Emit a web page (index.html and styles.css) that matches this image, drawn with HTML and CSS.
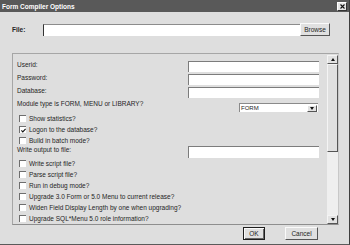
FILE: index.html
```html
<!DOCTYPE html>
<html lang="en">
  <head>
    <meta charset="UTF-8" />
    <title>Form Compiler Options</title>
    <link rel="stylesheet" href="styles.css">
  </head>
  <body>
    <div class="window">
      <div class="titlebar">
        <span class="title">Form Compiler Options</span>
        <span class="close">
          <svg width="5" height="5" viewBox="0 0 5 5">
            <path d="M0.5 0.5 L4.5 4.5 M4.5 0.5 L0.5 4.5" stroke="#111" stroke-width="1.1" />
          </svg>
        </span>
      </div>
      <div class="content">
        <div class="file-row">
          <label class="file-label">File:</label>
          <div class="file-input"></div>
          <button class="btn browse">Browse</button>
        </div>

        <div class="panel">
          <div class="panel-content">
            <div class="field-row">
              <label>Userid:</label>
              <div class="text-input"></div>
            </div>
            <div class="field-row">
              <label>Password:</label>
              <div class="text-input"></div>
            </div>
            <div class="field-row">
              <label>Database:</label>
              <div class="text-input"></div>
            </div>
            <div class="field-row">
              <label>Module type is FORM, MENU or LIBRARY?</label>
              <div class="select">
                <span class="select-value">FORM</span>
                <span class="select-btn"><span class="arrow-down"></span></span>
              </div>
            </div>
            <div class="check-row"><span class="cb"></span>Show statistics?</div>
            <div class="check-row">
              <span class="cb">
                <svg width="5" height="5" viewBox="0 0 5 5">
                  <path d="M0.4 2.4 L1.8 3.9 L4.6 0.8" stroke="#111" stroke-width="1.1" fill="none" />
                </svg>
              </span>Logon to the database?
            </div>
            <div class="check-row"><span class="cb"></span>Build in batch mode?</div>
            <div class="field-row output-row">
              <label>Write output to file:</label>
              <div class="text-input tall"></div>
            </div>
            <div class="check-row"><span class="cb"></span>Write script file?</div>
            <div class="check-row"><span class="cb"></span>Parse script file?</div>
            <div class="check-row"><span class="cb"></span>Run in debug mode?</div>
            <div class="check-row"><span class="cb"></span>Upgrade 3.0 Form or 5.0 Menu to current release?</div>
            <div class="check-row"><span class="cb"></span>Widen Field Display Length by one when upgrading?</div>
            <div class="check-row"><span class="cb"></span>Upgrade SQL*Menu 5.0 role information?</div>
          </div>
          <div class="scrollbar">
            <div class="sb-btn"><span class="arrow-up"></span></div>
            <div class="sb-thumb"></div>
            <div class="sb-track"></div>
            <div class="sb-btn"><span class="arrow-down"></span></div>
          </div>
        </div>

        <div class="actions">
          <button class="btn ok">OK</button>
          <button class="btn cancel">Cancel</button>
        </div>
      </div>
    </div>
  </body>
</html>
```

FILE: styles.css
```css
* {
  box-sizing: border-box;
}
body {
  margin: 0;
  font-family: "Liberation Sans", Arial, sans-serif;
  font-size: 6.5px;
  color: #252525;
}
.window {
  width: 350px;
  height: 245px;
  background: #dedede;
  border-right: 1px solid #3e3e3e;
  border-bottom: 1px solid #5a5a5a;
  display: flex;
  flex-direction: column;
}
.titlebar {
  height: 12px;
  flex-shrink: 0;
  background: #595959;
  display: flex;
  align-items: center;
  justify-content: space-between;
  padding: 0 2px 0 2px;
}
.title {
  color: #fff;
  font-weight: bold;
}
.close {
  width: 10px;
  height: 9px;
  background: #e6e6e6;
  border: 1px solid;
  border-color: #fff #333 #333 #fff;
  display: flex;
  align-items: center;
  justify-content: center;
}
.content {
  flex: 1;
  padding: 11px 10px 0 12px;
  display: flex;
  flex-direction: column;
}
.file-row {
  display: flex;
  align-items: center;
  height: 13px;
  padding-right: 9px;
}
.file-label {
  width: 31px;
  font-weight: bold;
}
.file-input {
  flex: 1;
  height: 12px;
  background: #fff;
  border-top: 1px solid #8c8c8c;
  border-left: 1px solid #333;
}
.btn {
  font-family: inherit;
  font-size: 6.5px;
  color: #252525;
  background: #e0e0e0;
  border: 1px solid;
  border-color: #fafafa #555 #555 #fafafa;
  padding: 0;
  height: 13px;
}
.browse {
  width: 30px;
}
.panel {
  margin-top: 17px;
  height: 172px;
  border: 1px solid #a6a6a6;
  border-right-color: #c8c8c8;
  border-bottom-color: #8e8e8e;
  display: flex;
}
.panel-content {
  flex: 1;
  padding: 7px 8px 0 4px;
}
.field-row {
  display: flex;
  justify-content: space-between;
  align-items: flex-start;
  height: 13px;
}
.field-row label {
  line-height: 8px;
}
.text-input {
  width: 131px;
  height: 11px;
  background: #fff;
  border-top: 1px solid #7c7c7c;
  border-left: 1px solid #7c7c7c;
}
.text-input.tall {
  height: 12px;
}
.output-row {
  height: 12px;
}
.select {
  width: 79px;
  height: 9px;
  margin-top: 3px;
  margin-right: 1px;
  background: #fff;
  border-top: 1px solid #8a8a8a;
  border-left: 1px solid #8a8a8a;
  display: flex;
  align-items: center;
  justify-content: space-between;
}
.select-value {
  padding-left: 1px;
  font-size: 6px;
}
.select-btn {
  width: 10px;
  height: 7px;
  margin-right: 1px;
  background: #e2e2e2;
  border: 1px solid;
  border-color: #fff #555 #555 #fff;
  display: flex;
  align-items: center;
  justify-content: center;
}
.check-row {
  display: flex;
  align-items: center;
  gap: 3px;
  height: 11px;
  padding-left: 2px;
}
.cb {
  width: 7px;
  height: 7px;
  background: #fff;
  border-top: 1px solid #6e6e6e;
  border-left: 1px solid #6e6e6e;
  display: flex;
  align-items: center;
  justify-content: center;
}
.scrollbar {
  width: 11px;
  margin-top: 1px;
  display: flex;
  flex-direction: column;
}
.sb-btn {
  height: 9px;
  background: #e2e2e2;
  border: 1px solid;
  border-color: #f4f4f4 #555 #555 #f4f4f4;
  display: flex;
  align-items: center;
  justify-content: center;
}
.sb-thumb {
  height: 88px;
  background: #e0e0e0;
  border: 1px solid;
  border-color: #f4f4f4 #555 #555 #f4f4f4;
}
.sb-track {
  flex: 1;
  background: #efefef;
}
.arrow-up {
  width: 0;
  height: 0;
  border-left: 2.5px solid transparent;
  border-right: 2.5px solid transparent;
  border-bottom: 3px solid #111;
}
.arrow-down {
  width: 0;
  height: 0;
  border-left: 2.5px solid transparent;
  border-right: 2.5px solid transparent;
  border-top: 3px solid #111;
}
.actions {
  margin-top: 2px;
  display: flex;
  justify-content: flex-end;
  gap: 20px;
  padding-right: 21px;
}
.ok {
  width: 22px;
  border: 1px solid #1e1e1e;
  box-shadow: inset 1px 1px 0 #fafafa, inset -1px -1px 0 #666;
}
.cancel {
  width: 33px;
}
```
